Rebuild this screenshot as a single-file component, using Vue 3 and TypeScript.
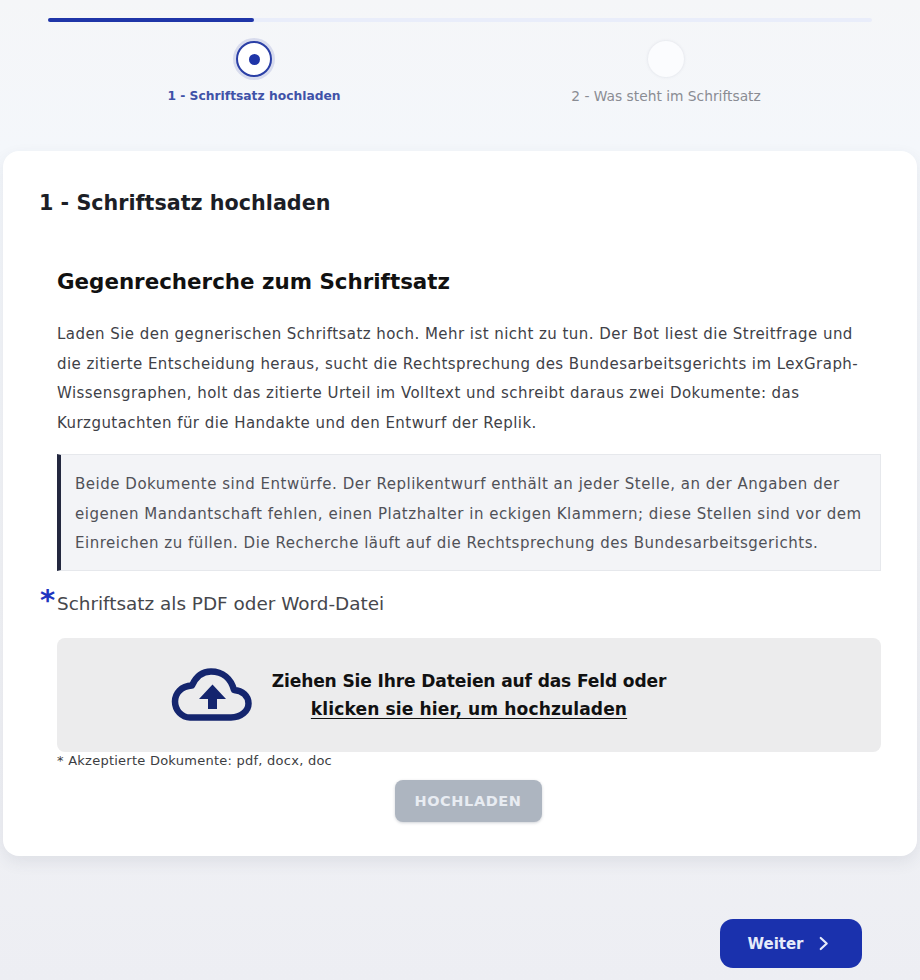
<script setup lang="ts">
const steps = [
  { label: '1 - Schriftsatz hochladen', active: true },
  { label: '2 - Was steht im Schriftsatz', active: false },
]
</script>

<template>
  <div class="page">
    <div class="progress-wrap">
      <div class="track"><div class="fill"></div></div>
      <div class="steps">
        <div v-for="s in steps" :key="s.label" class="step" :class="{ active: s.active }">
          <div class="dot"><span v-if="s.active" class="inner"></span></div>
          <div class="step-label">{{ s.label }}</div>
        </div>
      </div>
    </div>

    <main class="card">
      <h1>1 - Schriftsatz hochladen</h1>
      <section class="body">
        <h2>Gegenrecherche zum Schriftsatz</h2>
        <p class="intro">Laden Sie den gegnerischen Schriftsatz hoch. Mehr ist nicht zu tun. Der Bot liest die Streitfrage und die zitierte Entscheidung heraus, sucht die Rechtsprechung des Bundesarbeitsgerichts im LexGraph-Wissensgraphen, holt das zitierte Urteil im Volltext und schreibt daraus zwei Dokumente: das Kurzgutachten für die Handakte und den Entwurf der Replik.</p>
        <blockquote>Beide Dokumente sind Entwürfe. Der Replikentwurf enthält an jeder Stelle, an der Angaben der eigenen Mandantschaft fehlen, einen Platzhalter in eckigen Klammern; diese Stellen sind vor dem Einreichen zu füllen. Die Recherche läuft auf die Rechtsprechung des Bundesarbeitsgerichts.</blockquote>
        <div class="field-label"><span class="star">*</span>Schriftsatz als PDF oder Word-Datei</div>
        <div class="drop">
          <svg class="cloud" viewBox="0 0 82 58" width="82" height="58" aria-hidden="true">
            <path d="M20 51.5H61C71 51.5 78.5 45 78.5 37.5C78.5 30 72.5 24.5 64 24C61 12.5 52.5 5.5 41 5.5C32.5 5.5 26 10.5 22 19.5C11 20 5 27.5 5 35.5C5 44.5 12 51.5 20 51.5Z" fill="none" stroke="#14256e" stroke-width="6.5" stroke-linejoin="round"/>
            <path d="M42.5 18.5L56 33H47V43H38V33H29Z" fill="#14256e"/>
          </svg>
          <div class="drop-text">
            <div class="first">Ziehen Sie Ihre Dateien auf das Feld oder</div>
            <div class="link">klicken sie hier, um hochzuladen</div>
          </div>
        </div>
        <div class="note">* Akzeptierte Dokumente: pdf, docx, doc</div>
        <div class="upload-row"><button class="upload" type="button">HOCHLADEN</button></div>
      </section>
    </main>

    <div class="footer">
      <button class="next" type="button">
        Weiter
        <svg viewBox="0 0 12 16" width="11" height="15" aria-hidden="true"><path d="M3 2L9.5 8L3 14" fill="none" stroke="#e6ebfa" stroke-width="2.4" stroke-linecap="round" stroke-linejoin="round"/></svg>
      </button>
    </div>
  </div>
</template>

<style>
html, body { margin: 0; background: #f2f3f7; }
</style>

<style scoped>
.page {
  width: 920px;
  height: 980px;
  box-sizing: border-box;
  padding: 18px 3px 0;
  overflow: hidden;
  font-family: "DejaVu Sans", Inter, sans-serif;
  background: linear-gradient(180deg, #f5f6f8 0%, #f4f7fb 15%, #f2f3f6 60%, #edeef3 100%);
  color: #1b1d24;
}
.progress-wrap { padding: 0 45px; }
.track { height: 4px; border-radius: 2px; background: #e9edfa; }
.fill { width: 25%; height: 100%; border-radius: 2px; background: #1f35a8; }
.steps { display: grid; grid-template-columns: 1fr 1fr; margin-top: 19px; }
.step { display: flex; flex-direction: column; align-items: center; }
.dot {
  width: 36px; height: 36px; box-sizing: border-box; border-radius: 50%;
  background: #fbfcfe; display: flex; align-items: center; justify-content: center;
  box-shadow: 0 0 3px rgba(150, 155, 175, .25);
}
.active .dot { border: 2.5px solid #2a3fa6; box-shadow: 0 0 0 3px rgba(40, 60, 170, .14); background: #fff; }
.inner { width: 11px; height: 11px; border-radius: 50%; background: #1f35a8; }
.step-label { margin-top: 10px; font-size: 13.8px; line-height: 18px; color: #8a8c93; }
.active .step-label { font-weight: 700; font-size: 12.3px; color: #3f52a8; }

.card {
  margin-top: 46px;
  height: 705px;
  box-sizing: border-box;
  background: #fff;
  border-radius: 16px;
  box-shadow: 0 6px 16px rgba(60, 65, 90, .09);
  padding: 36px 36px 0;
}
h1 { margin: 0; font-size: 20.7px; line-height: 32px; font-weight: 700; color: #1c1e26; }
.body { padding: 0 0 0 18px; }
h2 { margin: 47px 0 0; font-size: 21.4px; line-height: 32px; font-weight: 700; color: #111; }
.intro { margin: 22px 0 0; max-width: 816px; font-size: 15px; line-height: 29.5px; letter-spacing: .45px; color: #404147; }
blockquote {
  margin: 16px 0 0;
  height: 117px;
  box-sizing: border-box;
  padding: 15px 12px 0 14px;
  border: 1px solid #e6e8ec;
  border-left: 4px solid #23283f;
  background: #f3f4f7;
  font-size: 15px;
  line-height: 29.5px;
  letter-spacing: .52px;
  color: #505157;
}
.field-label { position: relative; top: 1px; margin-top: 18px; font-size: 18.4px; line-height: 28px; color: #46474c; }
.star { position: absolute; left: -17px; top: -4px; font-size: 29px; line-height: 28px; font-weight: 700; color: #1f35c0; }
.drop {
  margin: 21px 0 0 0;
  height: 114px;
  border-radius: 8px;
  background: #ececed;
  display: flex;
  align-items: center;
  padding-left: 113px;
  gap: 7px;
}
.cloud { flex: none; }
.drop-text { width: 420px; flex: none; white-space: nowrap; text-align: center; font-size: 17.1px; line-height: 28px; font-weight: 700; color: #111; }
.first { letter-spacing: -.15px; }
.link { text-decoration: underline; text-underline-offset: 3px; letter-spacing: .1px; }
.note { font-size: 13px; line-height: 17px; letter-spacing: .25px; color: #3c3d42; }
.upload-row { display: flex; justify-content: center; margin-top: 11px; padding-right: 2px; }
.upload {
  width: 147px; height: 42px; border: 0; border-radius: 8px;
  background: #adb5c0; color: #e8ecf2; font: 700 14.5px "DejaVu Sans", sans-serif; letter-spacing: .6px;
  box-shadow: 0 1px 3px rgba(60, 70, 90, .25);
}
.footer { display: flex; justify-content: flex-end; margin-top: 63px; padding-right: 55px; }
.next {
  width: 142px; height: 49px; border: 0; border-radius: 13px; padding: 0 6px 0 0;
  background: #1a31ad; color: #e6ebfa; font: 700 15px "DejaVu Sans", sans-serif;
  display: flex; align-items: center; justify-content: center; gap: 14px;
}
</style>
